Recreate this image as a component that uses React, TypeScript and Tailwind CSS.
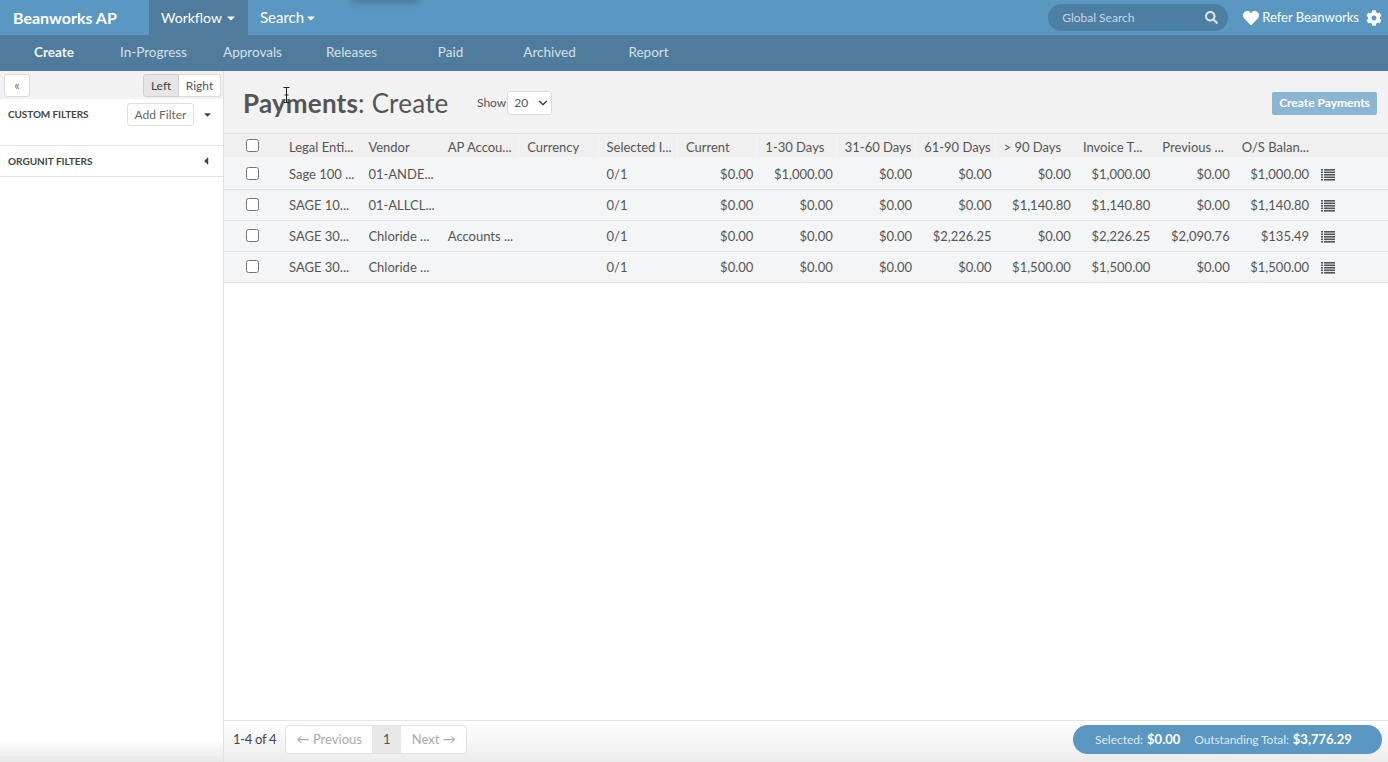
import React from 'react';
import { FaHeart, FaCog, FaSearch, FaCaretDown, FaCaretLeft } from 'react-icons/fa';
import { ChevronDown } from 'lucide-react';

const subNav = [
  { label: 'Create', w: 'w-[104px] pl-[4px]', active: true },
  { label: 'In-Progress', w: 'w-[99px]' },
  { label: 'Approvals', w: 'w-[99px]' },
  { label: 'Releases', w: 'w-[99px]' },
  { label: 'Paid', w: 'w-[99px]' },
  { label: 'Archived', w: 'w-[99px]' },
  { label: 'Report', w: 'w-[99px]' },
];

const headers = ['Legal Enti...', 'Vendor', 'AP Accou...', 'Currency', 'Selected I...', 'Current', '1-30 Days', '31-60 Days', '61-90 Days', '> 90 Days', 'Invoice T...', 'Previous ...', 'O/S Balan...'];

const rows = [
  ['Sage 100 ...', '01-ANDE...', '', '0/1', '$0.00', '$1,000.00', '$0.00', '$0.00', '$0.00', '$1,000.00', '$0.00', '$1,000.00'],
  ['SAGE 10...', '01-ALLCL...', '', '0/1', '$0.00', '$0.00', '$0.00', '$0.00', '$1,140.80', '$1,140.80', '$0.00', '$1,140.80'],
  ['SAGE 30...', 'Chloride ...', 'Accounts ...', '0/1', '$0.00', '$0.00', '$0.00', '$2,226.25', '$0.00', '$2,226.25', '$2,090.76', '$135.49'],
  ['SAGE 30...', 'Chloride ...', '', '0/1', '$0.00', '$0.00', '$0.00', '$0.00', '$1,500.00', '$1,500.00', '$0.00', '$1,500.00'],
];

const gridCols = 'grid grid-cols-[57px_repeat(13,79.4px)_1fr] items-center';

const Check = () => (
  <div className="flex justify-end pr-[22px]">
    <input type="checkbox" className="w-[13px] h-[13px] m-0 -translate-y-[2px]" />
  </div>
);

const ListIcon = () => (
  <svg width="14" height="12" viewBox="0 0 14 12" className="text-[#555] ml-2">
    {[0, 2.5, 5, 7.5, 10].map((y) => (
      <g key={y} fill="currentColor">
        <rect x="0" y={y} width="2" height="1.6" />
        <rect x="3" y={y} width="11" height="1.6" />
      </g>
    ))}
  </svg>
);

export default function App() {
  return (
    <div className="relative w-[1388px] h-[762px] overflow-hidden flex flex-col bg-white text-[13px] text-[#555] font-['Lato','Liberation_Sans',sans-serif]">
      {/* Top bar */}
      <header className="h-[35px] shrink-0 flex items-stretch bg-[#5a97c1] text-white">
        <div className="w-[149px] pl-[13px] flex items-center text-[16px] font-bold">Beanworks AP</div>
        <div className="w-[99px] pl-[12px] flex items-center gap-[3px] bg-[#4f7c9c] text-[14px]">
          Workflow <FaCaretDown className="w-[12px] h-[12px]" />
        </div>
        <div className="pl-[12px] flex items-center gap-[1px] text-[15px]">
          Search <FaCaretDown className="w-[12px] h-[12px]" />
        </div>
        <div className="ml-auto flex items-center">
          <div className="w-[180px] h-[27px] mr-[15px] pl-[14px] pr-[10px] rounded-full bg-[#4c7fa3] flex items-center justify-between text-[12px] text-[#c3d6e3]">
            Global Search
            <FaSearch className="w-[13px] h-[13px] text-[#d8e5ee]" />
          </div>
          <FaHeart className="w-[16px] h-[16px] mr-[3px]" />
          <span className="text-[13px]">Refer Beanworks</span>
          <FaCog className="w-[16px] h-[16px] ml-[7px] mr-[6px]" />
        </div>
      </header>

      {/* Sub nav */}
      <nav className="h-[36px] shrink-0 flex items-center pb-[2px] bg-[#4f7c9c] text-[13.5px] text-[#d5e0e8]">
        {subNav.map((item) => (
          <div key={item.label} className={`${item.w} text-center ${item.active ? 'font-bold text-[#eef3f6]' : ''}`}>
            {item.label}
          </div>
        ))}
      </nav>

      <div className="flex-1 flex min-h-0">
        {/* Sidebar */}
        <aside className="w-[224px] shrink-0 flex flex-col border-r border-[#e2e2e4]">
          <div className="h-[28px] shrink-0 bg-[#f2f2f3] flex items-start justify-between pl-[4px] pr-[2px] pt-[3px]">
            <button className="w-[26px] h-[23px] bg-white border border-[#dcdcdc] rounded-[3px] text-[#777] text-[13px] leading-none">«</button>
            <div className="flex h-[23px] text-[12px] rounded-[3px]">
              <span className="w-[36px] flex items-center justify-center bg-[#e6e6e6] border border-[#d0d0d0] rounded-l-[3px] text-[#444]">Left</span>
              <span className="w-[42px] flex items-center justify-center bg-white border border-l-0 border-[#dcdcdc] rounded-r-[3px]">Right</span>
            </div>
          </div>
          <div className="h-[47px] shrink-0 border-b border-[#e4e4e6] flex items-start pt-[4px] pl-[8px]">
            <span className="w-[119px] h-[23px] flex items-center text-[10px] font-bold text-[#444] tracking-[-0.1px]">CUSTOM FILTERS</span>
            <span className="w-[67px] h-[23px] flex items-center justify-center bg-white border border-[#e0e0e0] rounded-[3px] text-[12px] text-[#666]">Add Filter</span>
            <FaCaretDown className="w-[11px] h-[11px] ml-[8px] mt-[6px] text-[#444]" />
          </div>
          <div className="h-[31px] shrink-0 border-b border-[#e4e4e6] flex items-center justify-between pl-[8px] pr-[11px]">
            <span className="text-[10px] font-bold text-[#444]">ORGUNIT FILTERS</span>
            <FaCaretLeft className="w-[12px] h-[12px] text-[#444]" />
          </div>
          <div className="flex-1" />
          <div className="h-[22px] shrink-0 bg-gradient-to-b from-white to-[#e8e8e8]" />
        </aside>

        {/* Main */}
        <main className="flex-1 min-w-0 flex flex-col">
          <div className="h-[62px] shrink-0 bg-[#f2f2f3] flex items-center pt-[2px] pl-[19px] pr-[11px]">
            <h1 className="text-[26px] text-[#555] font-normal tracking-[0.2px] w-[234px]">
              <span className="font-bold">Payments</span>: Create
            </h1>
            <span className="text-[12px] text-[#555] mr-[1px]">Show</span>
            <div className="w-[45px] h-[24px] bg-white border border-[#ddd] rounded-[3px] flex items-center justify-between pl-[6px] pr-[1px] text-[12px]">
              20 <ChevronDown className="w-[14px] h-[14px] text-[#333]" />
            </div>
            <button className="ml-auto w-[105px] h-[23px] rounded-[2px] bg-[#8bb6d3] text-white text-[12px] font-bold">Create Payments</button>
          </div>

          <div className={`${gridCols} h-[24px] shrink-0 bg-[#f0f0f0] border-t border-[#e2e2e4]`}>
            <div className="pt-[4px]"><Check /></div>
            {headers.map((h, i) => (
              <div key={h} className={`self-stretch flex items-center pt-[5px] pl-[8px] whitespace-nowrap overflow-hidden ${i >= 2 && i <= 8 ? 'border-r border-[#f5f5f5]' : ''}`}>{h}</div>
            ))}
          </div>

          {rows.map((row, i) => (
            <div key={i} className={`${gridCols} ${i === 0 ? 'h-[33px] pt-[4px]' : 'h-[31px] pt-[2px]'} shrink-0 bg-[#f4f5f7] border-b border-[#e4e5e8]`}>
              <Check />
              <div className="pl-[8px] whitespace-nowrap">{row[0]}</div>
              <div className="pl-[8px] whitespace-nowrap">{row[1]}</div>
              <div className="pl-[8px] whitespace-nowrap">{row[2]}</div>
              <div />
              <div className="pl-[8px]">{row[3]}</div>
              {row.slice(4).map((v, j) => (
                <div key={j} className="text-right pr-[4px]">{v}</div>
              ))}
              <ListIcon />
            </div>
          ))}

          <div className="flex-1" />

          {/* Footer */}
          <div className="h-[42px] shrink-0 border-t border-[#e4e4e6] bg-gradient-to-b from-white to-[#ececec] flex items-start pl-[9px] pr-[6px] pt-[3px]">
            <span className="h-[31px] flex items-center text-[13px] tracking-[-0.3px] text-[#444] mr-[9px]">1-4 of 4</span>
            <div className="flex h-[29px] mt-[1px] text-[13px] text-[#aaa] border border-[#e2e2e2] rounded-[4px] bg-white">
              <span className="w-[86px] flex items-center justify-center">← Previous</span>
              <span className="w-[29px] flex items-center justify-center bg-[#e8e8e8] text-[#555]">1</span>
              <span className="w-[65px] flex items-center justify-center">Next →</span>
            </div>
            <div className="ml-auto w-[309px] h-[29px] mt-[1px] rounded-full bg-[#5a97c1] text-[12px] text-[#dce8f0] flex items-center pl-[22px]">
              Selected:
              <span className="ml-[4px] text-[13px] font-bold text-white">$0.00</span>
              <span className="ml-[14px] tracking-[-0.1px]">Outstanding Total:</span>
              <span className="ml-[4px] text-[13px] font-bold text-white">$3,776.29</span>
            </div>
          </div>
        </main>
      </div>

      {/* text cursor caught in the capture */}
      <svg width="7" height="16" viewBox="0 0 7 16" className="absolute left-[283px] top-[87px] text-[#222]">
        <path d="M0.5 0.5h6M0.5 15.5h6M3.5 0.5v15M1.5 8h4" stroke="currentColor" fill="none" />
      </svg>
      {/* blurred shadow at the top edge */}
      <div className="absolute left-[350px] -top-[6px] w-[70px] h-[9px] rounded-full bg-[#4a7a9c] blur-[3px]" />
    </div>
  );
}
